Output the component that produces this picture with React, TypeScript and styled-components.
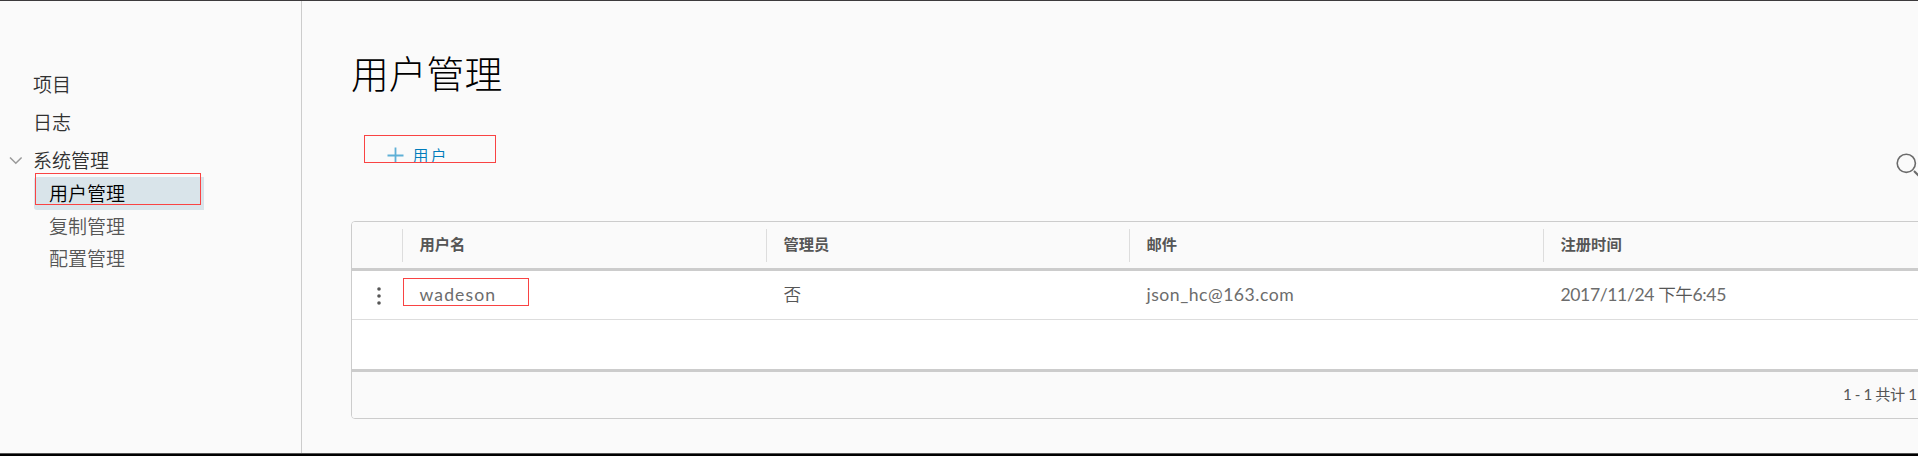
import React from 'react';
import styled, { createGlobalStyle, css } from 'styled-components';

const Global = createGlobalStyle`
  * { box-sizing: border-box; }
  html, body { margin: 0; overflow: hidden; background: #fafafa; }
  body { font-family: Lato, "Noto Sans CJK SC", sans-serif; color: #565656; }
`;

const Page = styled.div`
  display: flex;
  width: 100%;
  height: 456px;
  overflow: hidden;
  background: #fafafa;
  border-top: 1px solid #3c3a3c;
  border-bottom: 2px solid #000;
  box-shadow: inset 0 -1px #555;
`;

const Sidebar = styled.nav`
  flex: 0 0 302px;
  margin-bottom: 1px;
  padding-top: 64px;
  border-right: 1px solid #ccc;
`;

const NavItem = styled.div`
  display: flex;
  align-items: center;
  height: 37.7px;
  padding-left: 9px;
  font-size: 19px;
  font-weight: 350;
  color: #313131;
`;

const NavCaret = styled.span`
  display: flex;
  width: 24px;
  padding-top: 3px;
`;

const SubMenu = styled.div`
  display: flex;
  flex-direction: column;
  width: 169.5px;
  margin: -1px 0 0 34px;
`;

const SubItem = styled.div<{ $active?: boolean }>`
  position: relative;
  display: flex;
  align-items: center;
  height: 32.7px;
  padding: 0 0 2px 15px;
  font-size: 19px;
  font-weight: 350;
  color: ${p => (p.$active ? '#000' : '#565656')};
  ${p => p.$active && css`background: #d9e4ea; border-radius: 3px 0 0 3px;`}
`;

const Mark = styled.span<{ $x: number; $y: number; $w: number; $h: number }>`
  position: absolute;
  left: ${p => p.$x}px;
  top: ${p => p.$y}px;
  width: ${p => p.$w}px;
  height: ${p => p.$h}px;
  border: 1px solid #f94343;
`;

const Main = styled.main`
  flex: 1;
  min-width: 0;
  padding-left: 49px;
`;

const Title = styled.h1`
  margin: 0;
  padding-top: 46px;
  height: 134px;
  font-size: 37.8px;
  line-height: 54px;
  font-weight: 300;
  color: #000;
`;

const Toolbar = styled.div`
  display: flex;
  justify-content: space-between;
  height: 86px;
`;

const AddButton = styled.button`
  display: flex;
  align-items: flex-start;
  width: 132px;
  height: 28px;
  margin-left: 13px;
  padding: 11px 0 0 22px;
  overflow: hidden;
  border: 1px solid #f94343;
  background: transparent;
  color: #007cbb;
  font: 350 16px/20px Lato, "Noto Sans CJK SC", sans-serif;
  letter-spacing: 2px;
`;

const AddLabel = styled.span`
  margin: -1px 0 0 8.5px;
`;

const SearchButton = styled.span`
  flex: 0 0 22px;
  min-width: 0;
  height: 28px;
  padding-top: 18px;
  overflow: visible;
`;

const Grid = styled.section`
  width: 1620px;
  height: 198px;
  border: 1px solid #ccc;
  border-radius: 4px;
  background: #fff;
  overflow: hidden;
`;

const Row = styled.div<{ $head?: boolean }>`
  display: grid;
  grid-template-columns: 50px 364px 363px 414px 1fr;
  align-items: center;
  height: 49px;
  background: ${p => (p.$head ? '#fafafa' : '#fff')};
  border-bottom: ${p => (p.$head ? '3px solid #ccc' : '1px solid #ddd')};
`;

const HeadCell = styled.div`
  display: flex;
  align-items: center;
  height: 33px;
  padding: 0 0 4px 16.5px;
  border-left: 1px solid #ddd;
  font-size: 15.3px;
  font-weight: 700;
`;

const Cell = styled.div<{ $spacing?: number }>`
  position: relative;
  padding: 0 0 0 17.5px;
  font-size: 17.6px;
  font-weight: 350;
  line-height: 24px;
  white-space: nowrap;
  letter-spacing: ${p => p.$spacing ?? 0}px;
`;

const Latin = styled.span`
  font-weight: 400;
  color: #6c6c6c;
`;

const RowMenu = styled.div`
  display: flex;
  padding: 1px 0 0 24px;
`;

const Filler = styled.div`
  height: 49px;
`;

const Footer = styled.footer`
  display: flex;
  align-items: center;
  height: 49px;
  padding: 0 0 4px 1491px;
  border-top: 3px solid #ccc;
  background: #fafafa;
  font-size: 15.2px;
  font-weight: 400;
  word-spacing: -0.3px;
  letter-spacing: -0.3px;
  white-space: nowrap;
`;

export default function App() {
  return (
    <>
      <Global />
      <Page>
        <Sidebar>
          <NavItem><NavCaret />项目</NavItem>
          <NavItem><NavCaret />日志</NavItem>
          <NavItem>
            <NavCaret>
              <svg width="14" height="9" viewBox="0 0 14 9" fill="none" stroke="#999" strokeWidth="1.5">
                <path d="M1 1.5 6.8 7.2 12.6 1.5" />
              </svg>
            </NavCaret>
            系统管理
          </NavItem>
          <SubMenu>
            <SubItem $active>
              用户管理
              <Mark $x={1} $y={-4} $w={166} $h={32} />
            </SubItem>
            <SubItem>复制管理</SubItem>
            <SubItem>配置管理</SubItem>
          </SubMenu>
        </Sidebar>
        <Main>
          <Title>用户管理</Title>
          <Toolbar>
            <AddButton>
              <svg width="17" height="17" viewBox="0 0 17 17" stroke="#5fb0d6" strokeWidth="1.8">
                <path d="M8.5 0.5v16M.5 8.5h16" />
              </svg>
              <AddLabel>用户</AddLabel>
            </AddButton>
            <SearchButton>
              <svg width="26" height="26" viewBox="0 0 26 26" fill="none" stroke="#6b6b6b">
                <circle cx="10.3" cy="10.3" r="9.1" strokeWidth="1.6" />
                <path d="m18 18 6 6" strokeWidth="2" />
              </svg>
            </SearchButton>
          </Toolbar>
          <Grid>
            <Row $head>
              <span />
              <HeadCell>用户名</HeadCell>
              <HeadCell>管理员</HeadCell>
              <HeadCell>邮件</HeadCell>
              <HeadCell>注册时间</HeadCell>
            </Row>
            <Row>
              <RowMenu>
                <svg width="6" height="20" viewBox="0 0 6 20" fill="#565656">
                  <circle cx="3" cy="3" r="1.8" />
                  <circle cx="3" cy="10" r="1.8" />
                  <circle cx="3" cy="17" r="1.8" />
                </svg>
              </RowMenu>
              <Cell $spacing={1.1}>
                <Latin>wadeson</Latin>
                <Mark $x={1} $y={-5} $w={126} $h={28} />
              </Cell>
              <Cell>否</Cell>
              <Cell $spacing={0.5}><Latin>json_hc@163.com</Latin></Cell>
              <Cell $spacing={-0.4}><Latin>2017/11/24 </Latin>下午<Latin>6:45</Latin></Cell>
            </Row>
            <Filler />
            <Footer>1 - 1 共计 1 条记录</Footer>
          </Grid>
        </Main>
      </Page>
    </>
  );
}
